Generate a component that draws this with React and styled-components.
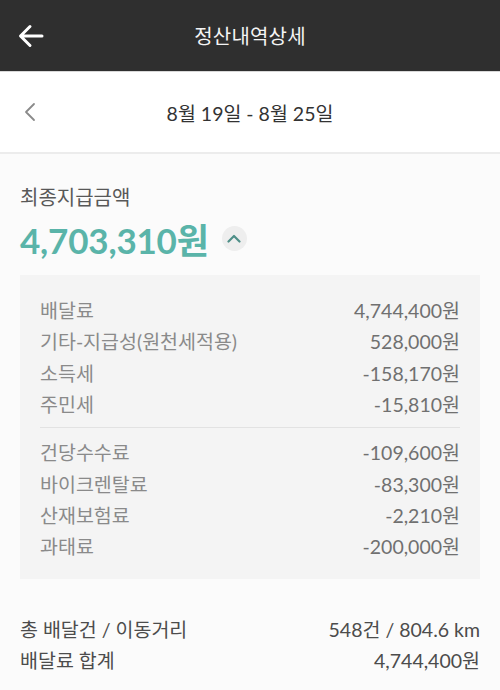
import React from "react";
import styled, { createGlobalStyle } from "styled-components";

const Global = createGlobalStyle`
  html, body { margin: 0; padding: 0; background: #fbfbfb; }
  body { font-family: Lato, "Noto Sans CJK KR", sans-serif; }
  * { box-sizing: border-box; }
`;

const Page = styled.div`
  width: 500px;
  min-height: 690px;
  background: #fbfbfb;
`;

const TopBar = styled.header`
  height: 72px;
  background: #2f2f2f;
  display: grid;
  grid-template-columns: 60px 1fr 60px;
  align-items: center;
  border-bottom: 1px solid #d8d8d8;
`;

const IconButton = styled.button`
  border: 0;
  background: transparent;
  padding: 0;
  display: flex;
  align-items: center;
  justify-content: flex-start;
  padding-left: ${(p) => p.$left || 0}px;
  height: 100%;
`;

const Title = styled.h1`
  margin: 0;
  text-align: center;
  color: #f4f4f4;
  font-size: 20px;
  font-weight: 400;
  letter-spacing: 0.2px;
`;

const DateBar = styled.div`
  height: 82px;
  background: #fff;
  display: grid;
  grid-template-columns: 60px 1fr 60px;
  align-items: center;
  border-bottom: 2px solid #ececec;
`;

const DateText = styled.div`
  text-align: center;
  color: #333;
  font-size: 19.5px;
`;

const Summary = styled.section`
  padding: 30px 20px 0;
`;

const Caption = styled.div`
  font-size: 20px;
  color: #585858;
  line-height: 26px;
`;

const AmountRow = styled.div`
  display: flex;
  align-items: center;
  gap: 13px;
  margin-top: 6px;
  height: 44px;
`;

const Amount = styled.div`
  font-size: 35px;
  font-weight: 700;
  color: #5ab4a9;
  letter-spacing: -0.2px;
`;

const Toggle = styled.span`
  width: 25px;
  height: 25px;
  border-radius: 50%;
  background: #eeeeee;
  display: flex;
  align-items: center;
  justify-content: center;
`;

const Box = styled.div`
  margin: 15px 20px 0;
  background: #f4f4f4;
  padding: 19px 20px 18px;
`;

const Row = styled.div`
  height: 31.3px;
  display: flex;
  justify-content: space-between;
  align-items: center;
  font-size: 19.5px;
  color: ${(p) => (p.$strong ? "#4c4c4c" : "#8a8a8a")};
`;

const Value = styled.span`
  color: ${(p) => (p.$strong ? "#4c4c4c" : "#707070")};
`;

const Divider = styled.hr`
  border: 0;
  border-top: 1px solid #e2e2e2;
  margin: 8px 0 8px;
`;

const Footer = styled.section`
  padding: 33px 20px 0;
`;

const Back = () => (
  <svg width="26" height="24" viewBox="0 0 26 24" fill="none">
    <path d="M24 12H3M12 2.5L2.5 12L12 21.5" stroke="#fff" strokeWidth="3" strokeLinecap="round" strokeLinejoin="round" />
  </svg>
);

const Prev = () => (
  <svg width="12" height="20" viewBox="0 0 12 20" fill="none">
    <path d="M10 2L2 10L10 18" stroke="#8a8a8a" strokeWidth="1.8" strokeLinecap="round" strokeLinejoin="round" />
  </svg>
);

const Up = () => (
  <svg width="14" height="9" viewBox="0 0 14 9" fill="none">
    <path d="M1.5 7.5L7 2L12.5 7.5" stroke="#4f8f88" strokeWidth="2.2" strokeLinecap="round" strokeLinejoin="round" />
  </svg>
);

const first = [
  ["배달료", "4,744,400원"],
  ["기타-지급성(원천세적용)", "528,000원"],
  ["소득세", "-158,170원"],
  ["주민세", "-15,810원"],
];
const second = [
  ["건당수수료", "-109,600원"],
  ["바이크렌탈료", "-83,300원"],
  ["산재보험료", "-2,210원"],
  ["과태료", "-200,000원"],
];

export default function App() {
  return (
    <Page>
      <Global />
      <TopBar>
        <IconButton $left={18}><Back /></IconButton>
        <Title>정산내역상세</Title>
        <span />
      </TopBar>
      <DateBar>
        <IconButton $left={24}><Prev /></IconButton>
        <DateText>8월 19일 - 8월 25일</DateText>
        <span />
      </DateBar>
      <Summary>
        <Caption>최종지급금액</Caption>
        <AmountRow>
          <Amount>4,703,310원</Amount>
          <Toggle><Up /></Toggle>
        </AmountRow>
      </Summary>
      <Box>
        {first.map(([k, v]) => (
          <Row key={k}><span>{k}</span><Value>{v}</Value></Row>
        ))}
        <Divider />
        {second.map(([k, v]) => (
          <Row key={k}><span>{k}</span><Value>{v}</Value></Row>
        ))}
      </Box>
      <Footer>
        <Row $strong><span>총 배달건 / 이동거리</span><Value $strong>548건 / 804.6 km</Value></Row>
        <Row $strong><span>배달료 합계</span><Value $strong>4,744,400원</Value></Row>
      </Footer>
    </Page>
  );
}
